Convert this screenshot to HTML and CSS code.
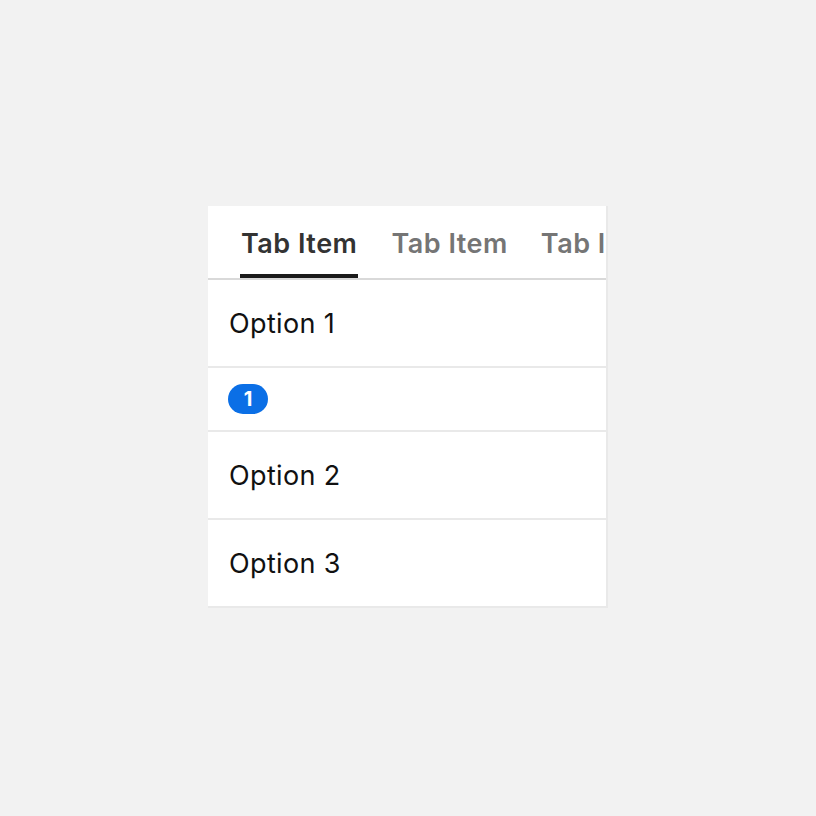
FILE: index.html
```html
<!DOCTYPE html>
<html>
<head>
<meta charset="utf-8">
<link rel="stylesheet" href="styles.css">
</head>
<body>
<div class="card">
  <div class="tabs">
    <div class="tab active">Tab Item</div>
    <div class="tab">Tab Item</div>
    <div class="tab">Tab Item</div>
  </div>
  <div class="row option">Option 1</div>
  <div class="row badge-row"><span class="badge">1</span></div>
  <div class="row option">Option 2</div>
  <div class="row option">Option 3</div>
</div>
</body>
</html>
```

FILE: styles.css
```css
html, body {
  margin: 0;
  padding: 0;
  background: #f2f2f2;
}
body {
  width: 816px;
  height: 816px;
  font-family: Inter, "Noto Sans", sans-serif;
}
.card {
  position: relative;
  top: 206px;
  left: 208px;
  width: 398px;
  background: #fff;
  border-right: 2px solid #e9e9e9;
}
.tabs {
  display: flex;
  gap: 33px;
  padding: 0 0 0 32px;
  height: 72px;
  border-bottom: 2px solid #d9d9d9;
  overflow: hidden;
  white-space: nowrap;
}
.tab {
  flex: none;
  font-size: 27px;
  font-weight: 600;
  letter-spacing: 0.5px;
  color: #757575;
  line-height: 72px;
  height: 72px;
  padding-top: 2px;
  box-sizing: border-box;
}
.tab.active {
  color: #333333;
  border-bottom: 4px solid #1a1a1a;
  padding: 2px 1px 0;
}
.row {
  border-bottom: 2px solid #e9e9e9;
  padding: 0 21px;
  display: flex;
  align-items: center;
}
.option {
  height: 86px;
  font-size: 27px;
  letter-spacing: 0.35px;
  color: #111;
}
.badge-row {
  height: 62px;
  padding-left: 20px;
}
.badge {
  display: inline-flex;
  align-items: center;
  justify-content: center;
  width: 40px;
  height: 30px;
  border-radius: 15px;
  background: #0b6fe6;
  color: #fff;
  font-size: 20px;
  font-weight: 700;
}
```
